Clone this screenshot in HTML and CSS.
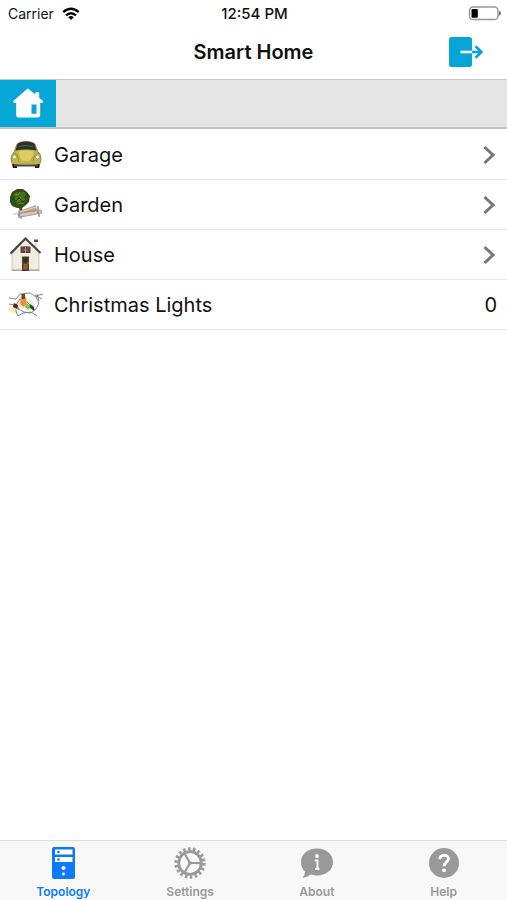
FILE: index.html
```html
<!DOCTYPE html>
<html lang="en">
<head>
<meta charset="utf-8">
<meta name="viewport" content="width=device-width, initial-scale=1">
<title>Smart Home</title>
<link rel="stylesheet" href="styles.css">
</head>
<body>
<div class="status">
  <div class="carrier">
    <span>Carrier</span>
    <svg width="18" height="14" viewBox="0 0 18 14" fill="none" stroke="#000" stroke-width="2.4"><path d="M1.2 5.2Q9-1.600 16.800 5.200M4 8.400Q9 4 14 8.400"/><path d="M9 13 6.200 10.200Q9 7.800 11.800 10.200Z" fill="#000" stroke="none"/></svg>
  </div>
  <span class="time">12:54 PM</span>
  <svg class="battery" width="33" height="16" viewBox="0 0 33 16"><rect x="1.500" y="1" width="28.500" height="12.600" rx="3.600" fill="#fff" stroke="#999" stroke-width="1.500"/><rect x="3.500" y="3" width="6.300" height="8.800" rx="1" fill="#000"/><path d="M31 4.800q2 .6 2 2.500t-2 2.500z" fill="#777"/></svg>
</div>
<header class="nav">
  <h1>Smart Home</h1>
  <button class="logout" type="button" aria-label="Log out">
    <svg width="34" height="30" viewBox="0 0 34 30"><rect x="0" y="0" width="23" height="30" rx="2.500" fill="#05a6d6"/><path d="M11.500 15h11.500" stroke="#fff" stroke-width="2.600"/><path d="M23 15h9M26.500 9.200 32.400 15l-5.900 5.800" fill="none" stroke="#05a6d6" stroke-width="2.600"/></svg>
  </button>
</header>
<div class="crumbs">
  <a class="home" href="#home" aria-label="Home">
    <svg width="30" height="30" viewBox="0 0 30 30"><path fill="#fff" fill-rule="evenodd" d="M15 .5 22.300 6.500V5.200q0-1.200 1.200-1.200H25q1.200 0 1.200 1.200v4.600l3.200 2.800q.9.9.4 1.700-.5.6-1.600.6h-1v12.300q0 2.300-2.300 2.300H6q-2.800 0-2.800-2.300V15H1.800q-1.200 0-1.600-.7-.3-.8.5-1.500L14 1Q14.500.5 15 .5ZM18.500 16.500V25.700h5V16.500Z"/></svg>
  </a>
</div>
<main>
  <ul class="list">
    <li><a href="#garage">
      <svg class="pic" width="34" height="36" viewBox="0 0 34 36"><path d="M3 23h5v8H4q-1-2-1-8M26 23h5q0 6-1 8h-4z" fill="#1c1815"/><path d="M5 27h24v2.500H5z" fill="#4c482f"/><path d="M8 7q3-2.500 9-2.500T26 7l3 8q3 2 3 7t-3 5H5q-3-1-3-5t3-7z" fill="#c4b548" stroke="#6b6431" stroke-width=".7"/><path d="M8.500 7q2-2.500 8.500-2.500t8.500 2.500l2 6.500q-10.500-2-21 0z" fill="#2c302a"/><path d="M10 9.500q7-2 14 0" fill="none" stroke="#596050"/><path d="M9.500 14.500q7.500-2 15 0-1 6-4 9.500h-7q-3-3.500-4-9.500" fill="#dfcf5f"/><path d="M4 16q5 0 6 9M30 16q-5 0-6 9" fill="none" stroke="#91853b" stroke-width=".8"/><circle cx="5.500" cy="20" r="2" fill="#f4efdb" stroke="#989064" stroke-width=".7"/><circle cx="28.500" cy="20" r="2" fill="#f4efdb" stroke="#989064" stroke-width=".7"/><path d="M2 26q15 2 30 0" fill="none" stroke="#b9af68" stroke-width="1.600"/></svg>
      <span class="name">Garage</span>
      <svg class="chev" width="14" height="20" viewBox="0 0 14 20"><path d="M1.500 2l8.500 8-8.500 8" /></svg>
    </a></li>
    <li><a href="#garden">
      <svg class="pic" width="34" height="36" viewBox="0 0 34 36"><path d="M2 27q6-3 13 0l-3 2z" fill="#dadce3"/><path d="M10 20h3l1 6h-3z" fill="#544338"/><path d="m1 10 2-5 5-3 6 0 4 3 3 4-1 6-3 3-4 3-5 0-5-2-2-4z" fill="#304d12"/><path d="M4 8l3-3 4 1 3-2 3 3-2 4 3 1-3 4-3-2-3 2-4-2 1-4z" fill="#486d1e"/><path d="m6 7 3 1 2-3M6 13l3 1 3-4M9 17l3-1 3 1" fill="none" stroke="#6d8a35" stroke-width="1"/><path d="m4 12 3 2 3-3 4 4 3-3" fill="none" stroke="#233b0c" stroke-width="1"/><path d="m10 24 17-6 1 6-17 4z" fill="#b9a18d"/><path d="m11 25 16-5" stroke="#e6d6c5" stroke-width="1.200"/><path d="m9 28 3-2 20-3 1 3-21 4z" fill="#d4c7ba" stroke="#8a8078" stroke-width=".7"/><path d="M10 24v7m19-12v8M12 29v3m18-5v3" fill="none" stroke="#858997" stroke-width="1.300"/></svg>
      <span class="name">Garden</span>
      <svg class="chev" width="14" height="20" viewBox="0 0 14 20"><path d="M1.500 2l8.500 8-8.500 8" /></svg>
    </a></li>
    <li><a href="#house">
      <svg class="pic" width="34" height="36" viewBox="0 0 34 36"><path d="M25.500 4v8h3V4" fill="#e5e1d9"/><path d="M25 2.500h4v2.500h-4z" fill="#54504b"/><path d="M3 17 16.500 2 30 15v18H3z" fill="#efede3" stroke="#b8b4a7" stroke-width=".7"/><path d="M1.500 16.500 16.500 1.500l15 14.500" fill="none" stroke="#484743" stroke-width="2.200"/><path d="M2.500 32.500h28v1.500h-28z" fill="#b5ab94"/><path d="M11.500 9.500h10v6.500h-10z" fill="#733f35"/><path d="M14.500 9.500h4v6.500h-4z" fill="#454d4c"/><path d="M16.500 9.500V16m-2-3h4" stroke="#b6a78f" stroke-width=".7"/><path d="M13 19.500h7V34h-7z" fill="#653a24"/><path d="M14.300 20.500h4.400v4.500h-4.400z" fill="#283437"/><path d="M14.500 27h4v5h-4z" fill="#925d3b"/><circle cx="19" cy="26" r=".6" fill="#e5b862"/></svg>
      <span class="name">House</span>
      <svg class="chev" width="14" height="20" viewBox="0 0 14 20"><path d="M1.500 2l8.500 8-8.500 8" /></svg>
    </a></li>
    <li><a href="#lights">
      <svg class="pic" width="34" height="36" viewBox="0 0 34 36"><circle cx="5" cy="22" r="5" fill="#fff4d7"/><circle cx="14" cy="15" r="6" fill="#ffe4ca"/><circle cx="20" cy="18" r="5" fill="#dff4ca"/><g fill="none" stroke="#77777a" stroke-width=".9"><path d="M0 11 7 12l4-5 10-1 6 4 3 6-3 6-5 4-7-1-5-3-3-4 4-6 7 3 8 8M0 17l6 1 4 5M6 22l3 7 5-3 8-1 6 4M27 10l3-2 4-1M26 8l7 4M30 14l-2-7"/></g><path d="m12.500 7 3.500 0 .5 7h-4z" fill="#67481d"/><path d="M12 12h4.500l1 5-3 3-3.500-3z" fill="#f38c3c"/><path d="m5 16 4 2-1 4-4-2z" fill="#50251d"/><path d="m3 21 4 1-2 4-3-2z" fill="#ffe3a3"/><path d="m21 17 4 3 0 4-5-4z" fill="#284620"/><path d="m17 16 4 3-1 4-4-3z" fill="#78c94c"/></svg>
      <span class="name">Christmas Lights</span>
      <span class="count">0</span>
    </a></li>
  </ul>
</main>
<nav class="tabs">
  <a class="tab active" href="#topology" aria-current="page">
    <svg width="34" height="34" viewBox="0 0 34 34"><rect x="6" y="1" width="23" height="32" rx="2" fill="currentColor"/><path d="M9 3.500h17.500v5H9zM9 11h17.500v5H9z" fill="#fff"/><circle cx="12.500" cy="6" r="1.300" fill="currentColor"/><circle cx="12.500" cy="13.500" r="1.300" fill="currentColor"/><circle cx="17.500" cy="22" r="2" fill="#fff"/><circle cx="17.500" cy="28" r="1.400" fill="#fff"/></svg>
    <span>Topology</span>
  </a>
  <a class="tab" href="#settings">
    <svg width="34" height="34" viewBox="0 0 34 34" fill="none" stroke="currentColor"><circle cx="17" cy="17" r="14" stroke-width="3.400" stroke-dasharray="2.500 2.387"/><circle cx="17" cy="17" r="11.300" stroke-width="2.800"/><path d="M17 17h11M17 17 11.500 7.500M17 17l-5.500 9.500" stroke-width="2.200"/><circle cx="17" cy="17" r="1.800" fill="currentColor" stroke="none"/></svg>
    <span>Settings</span>
  </a>
  <a class="tab" href="#about">
    <svg width="34" height="34" viewBox="0 0 34 34"><path d="M17 2.500c9 0 16 5.700 16 13.500s-7 13.500-16 13.500q-3.500 0-6.200-.9Q7 31.500 2.500 31.700 5 29.500 5 25.800 1 21.500 1 16C1 8.200 8 2.500 17 2.500Z" fill="currentColor"/><circle cx="17" cy="10" r="1.900" fill="#fff"/><path d="M14.800 14.500h2.700v8M15 23h4.500" fill="none" stroke="#fff" stroke-width="2"/></svg>
    <span>About</span>
  </a>
  <a class="tab" href="#help">
    <svg width="34" height="34" viewBox="0 0 34 34"><circle cx="17" cy="17" r="15" fill="currentColor"/><path d="M12.800 13.200c.1-5.200 8.700-5.200 8.700-.5 0 3.400-4.400 3.500-4.400 7.500" fill="none" stroke="#fff" stroke-width="2.800"/><circle cx="17" cy="24.300" r="1.900" fill="#fff"/></svg>
    <span>Help</span>
  </a>
</nav>
</body>
</html>
```
FILE: styles.css
```css
* {
  box-sizing: border-box;
}

body {
  margin: 0;
  min-height: 100vh;
  display: flex;
  flex-direction: column;
  background: #fff;
  color: #111;
  font-family: Inter, "Liberation Sans", sans-serif;
}

a {
  color: inherit;
  text-decoration: none;
}

svg {
  display: block;
  flex: none;
}

.status {
  display: grid;
  grid-template-columns: 1fr auto 1fr;
  align-items: center;
  height: 27px;
  padding: 0 6px 0 8px;
  font-size: 14px;
}

.carrier {
  display: flex;
  align-items: center;
  gap: 8px;
}

.time {
  font-size: 15px;
  font-weight: 500;
}

.battery {
  justify-self: end;
}

.nav {
  display: grid;
  grid-template-columns: 1fr auto 1fr;
  align-items: center;
  height: 52px;
  padding: 0 24px 2px;
}

.nav h1 {
  grid-column: 2;
  margin: 0;
  font-size: 20px;
  line-height: 24px;
  font-weight: 600;
}

.logout {
  justify-self: end;
  padding: 0;
  border: 0;
  background: none;
}

.crumbs {
  display: flex;
  height: 50px;
  border-top: 1px solid #c8c8c8;
  border-bottom: 2px solid #c2c2c2;
  background: #e4e4e4;
}

.home {
  display: flex;
  align-items: center;
  justify-content: center;
  width: 56px;
  padding-bottom: 2px;
  background: #05a6d6;
}

main {
  flex: 1;
}

.list {
  margin: 0;
  padding: 1px 0 0;
  list-style: none;
}

.list a {
  display: flex;
  align-items: center;
  gap: 11px;
  min-height: 50px;
  padding: 0 10px 0 9px;
  border-bottom: 1px solid #e8e8e8;
  font-size: 20px;
  line-height: 24px;
}

.name {
  flex: 1;
}

.chev {
  fill: none;
  stroke: #777;
  stroke-width: 3;
}

.tabs {
  display: grid;
  grid-template-columns: repeat(4, 1fr);
  height: 60px;
  border-top: 1px solid #dcdcdc;
  background: #f8f8f8;
}

.tab {
  display: flex;
  flex-direction: column;
  align-items: center;
  gap: 4px;
  padding-top: 5px;
  color: #999;
  font-size: 12px;
  line-height: 16px;
  font-weight: 600;
}

.active {
  color: #0a7aff;
}
```
